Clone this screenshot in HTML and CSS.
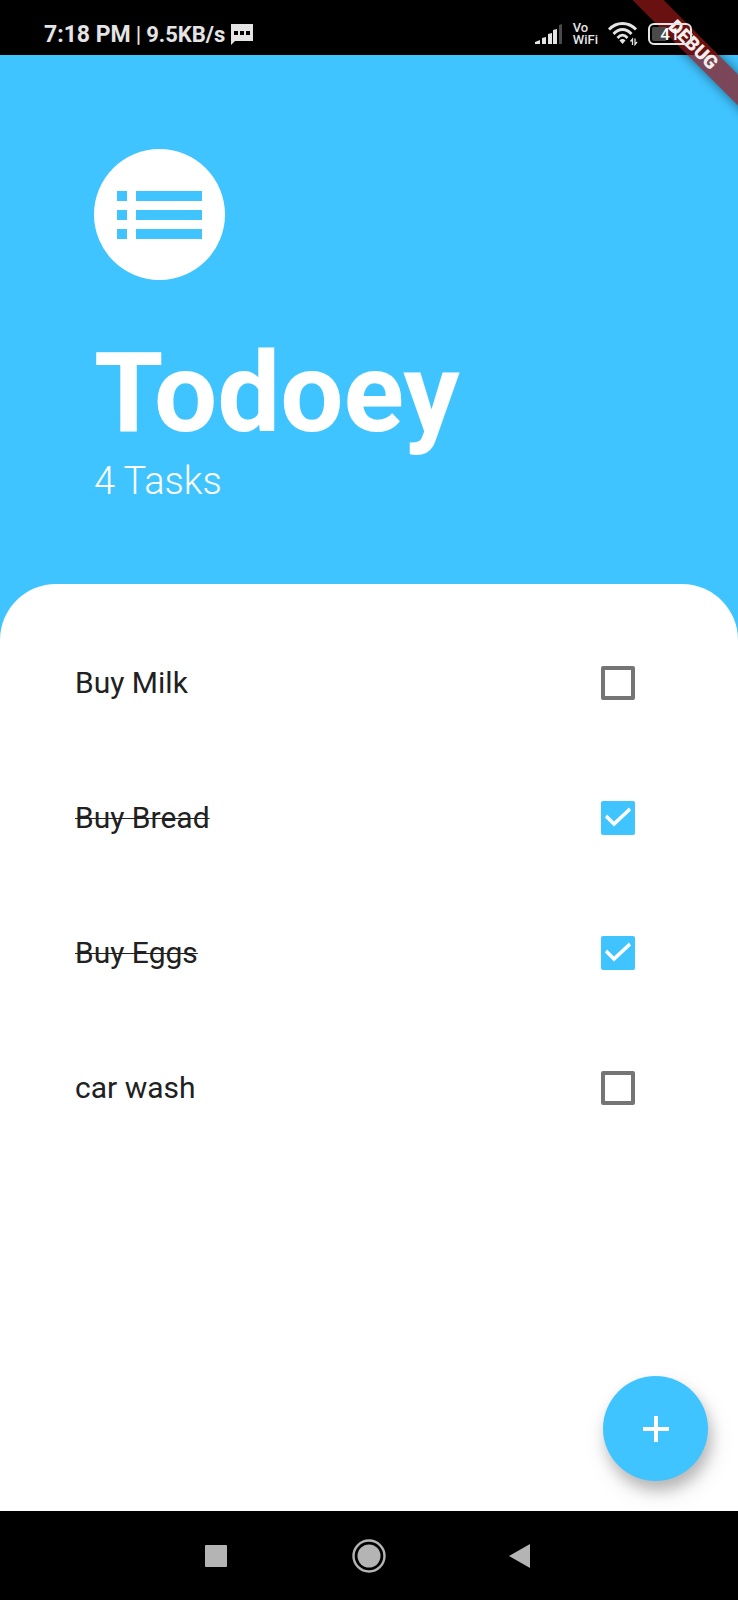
FILE: index.html
```html
<!DOCTYPE html>
<html lang="en">
<head>
<meta charset="utf-8">
<meta name="viewport" content="width=device-width, initial-scale=1">
<title>Todoey</title>
<link rel="stylesheet" href="styles.css">
</head>
<body>
<div class="app">
  <div class="status-bar">
    <div class="status-left">
      <span class="clock">7:18 PM</span>
      <span class="divider">|</span>
      <span class="speed">9.5KB/s</span>
      <svg class="chat-icon" width="24" height="22" viewBox="0 0 24 22" aria-hidden="true">
        <path fill="#e4e4e4" d="M1 1H23V18H5L1 22Z"/>
        <path fill="#000" d="M4 8h4v4H4zM10 8h4v4h-4zM16 8h4v4h-4z"/>
      </svg>
    </div>
    <div class="status-right">
      <svg width="28" height="22" viewBox="0 0 28 22" aria-hidden="true">
        <path fill="#e4e4e4" d="M0 21v-2l5-2v4zM7 15l4-1v7H7zM13 11l4-1v11h-4zM18 7l4-1v15h-4z"/>
        <path fill="#4a4a4a" d="M24 2l3-1v20h-3z"/>
      </svg>
      <span class="vowifi"><span>Vo</span><span>WiFi</span></span>
      <svg width="30" height="24" viewBox="0 0 30 24" aria-hidden="true">
        <g fill="none" stroke="#e4e4e4" stroke-width="2.8">
          <path d="M1 7.5C8.500-.5 20.500-.5 28 7.500"/>
          <path d="M5.500 12C11 6 18 6 23.500 12"/>
          <path d="M9.500 16C13 12.200 16 12.200 19.500 16"/>
        </g>
        <path fill="#e4e4e4" d="M11.500 18.500c1.500-2 4.500-2 6 0L14.500 22z"/>
        <path fill="none" stroke="#e4e4e4" stroke-width="1.300" d="M24.500 23v-6l-2 2.500M27 16.500v6l2-2.500"/>
      </svg>
      <span class="battery"><span class="battery-level">41</span></span>
    </div>
  </div>
  <div class="banner-clip"><div class="banner">DEBUG</div></div>

  <header class="header">
    <div class="logo">
      <svg width="86" height="48" viewBox="0 0 86 48" aria-hidden="true">
        <path fill="#40c4ff" d="M0 0h10v10H0zM19 0h66v10H19zM0 19h10v10H0zM19 19h66v10H19zM0 38h10v10H0zM19 38h66v10H19z"/>
      </svg>
    </div>
    <h1 class="title">Todoey</h1>
    <p class="count">4 Tasks</p>
  </header>

  <main class="sheet">
    <ul class="tasks">
      <li><label class="task"><span class="task-name">Buy Milk</span><input class="check" type="checkbox"></label></li>
      <li><label class="task"><span class="task-name done">Buy Bread</span><input class="check" type="checkbox" checked></label></li>
      <li><label class="task"><span class="task-name done">Buy Eggs</span><input class="check" type="checkbox" checked></label></li>
      <li><label class="task"><span class="task-name">car wash</span><input class="check" type="checkbox"></label></li>
    </ul>
    <button class="fab" type="button" aria-label="Add task">
      <svg width="28" height="28" viewBox="0 0 28 28" aria-hidden="true"><path fill="#fff" d="M12 1h4v11h11v4H16v11h-4V16H1v-4h11z"/></svg>
    </button>
  </main>

  <nav class="nav-bar" aria-label="System navigation">
    <button type="button" aria-label="Recent apps"><svg width="34" height="34" viewBox="0 0 34 34"><rect x="6" y="6" width="22" height="22" rx="1" fill="#b4b4b4"/></svg></button>
    <button type="button" aria-label="Home"><svg width="34" height="34" viewBox="0 0 34 34"><circle cx="17" cy="17" r="15.500" fill="none" stroke="#b4b4b4" stroke-width="2.400"/><circle cx="17" cy="17" r="11.500" fill="#b4b4b4"/></svg></button>
    <button type="button" aria-label="Back"><svg width="34" height="34" viewBox="0 0 34 34"><path d="M4 17L25 5V29Z" fill="#b4b4b4"/></svg></button>
  </nav>
</div>
</body>
</html>
```
FILE: styles.css
```css
* {
  box-sizing: border-box;
}

body {
  margin: 0;
  font-family: Roboto, "Noto Sans", sans-serif;
  color: #212121;
}

.app {
  position: relative;
  display: flex;
  flex-direction: column;
  min-height: 100vh;
  background: #40c4ff;
}

.status-bar {
  display: flex;
  justify-content: space-between;
  height: 55px;
  padding: 14px 46px 0 44px;
  background: #000;
  color: #e4e4e4;
}

.status-left,
.status-right {
  position: relative;
  z-index: 2;
  display: flex;
  align-items: center;
  height: 40px;
}

.status-left {
  gap: 5px;
  font-size: 23px;
  font-weight: 700;
}

.divider {
  font-size: 22px;
  font-weight: 500;
}

.speed {
  font-size: 22px;
}

.status-right {
  gap: 10px;
}

.vowifi {
  display: flex;
  flex-direction: column;
  font-size: 13px;
  font-weight: 500;
  line-height: 12px;
}

.battery {
  display: flex;
  align-items: center;
  justify-content: center;
  width: 44px;
  height: 22px;
  padding: 2px;
  border: 2px solid #e4e4e4;
  border-radius: 6px;
  background: linear-gradient(90deg, #4a4a4a 40%, transparent 40%) content-box;
}

.battery-level {
  color: #fff;
  font-size: 17px;
  font-weight: 500;
}

/* Corner ribbon */
.banner-clip {
  position: absolute;
  top: 0;
  right: 0;
  z-index: 1;
  width: 140px;
  height: 140px;
  overflow: hidden;
}

.banner {
  position: absolute;
  top: 34px;
  right: -55px;
  width: 200px;
  height: 22px;
  transform: rotate(45deg);
  background: rgba(145, 22, 24, 0.72);
  box-shadow: 0 0 12px rgba(0, 0, 0, 0.5);
  color: #f4eeee;
  font-size: 19px;
  font-weight: 900;
  line-height: 22px;
  text-align: center;
}

.header {
  padding: 94px 94px 80px;
  color: #fff;
}

.logo {
  display: grid;
  place-items: center;
  width: 131px;
  height: 131px;
  border-radius: 50%;
  background: #fff;
}

.title {
  margin: 47px 0 0;
  font-size: 112px;
  font-weight: 700;
  line-height: 132px;
}

.count {
  margin: 0;
  font-size: 38px;
  font-weight: 300;
  line-height: 45px;
}

.sheet {
  display: flex;
  flex: 1;
  flex-direction: column;
  justify-content: space-between;
  padding: 31px 30px 30px 75px;
  border-radius: 56px 56px 0 0;
  background: #fff;
}

.tasks {
  margin: 0;
  padding: 0;
  list-style: none;
}

.task {
  display: flex;
  align-items: center;
  justify-content: space-between;
  height: 135px;
  padding-right: 73px;
  font-size: 30px;
}

.done {
  text-decoration: line-through;
  text-decoration-thickness: 1px;
}

.check {
  width: 34px;
  height: 34px;
  margin: 0;
  border: 4px solid #757575;
  border-radius: 2px;
  appearance: none;
}

.check:checked {
  border: 0;
  background: #40c4ff;
}

.check:checked::before {
  display: block;
  width: 34px;
  height: 34px;
  background: #fff;
  clip-path: polygon(4px 17px, 6px 14px, 13px 21px, 28px 7px, 30px 10px, 13px 26px);
  content: "";
}

.fab {
  display: grid;
  place-items: center;
  align-self: flex-end;
  width: 105px;
  height: 105px;
  padding: 0;
  border: 0;
  border-radius: 50%;
  background: #40c4ff;
  box-shadow: 3px 9px 14px rgba(0, 0, 0, 0.22), 4px 12px 26px rgba(0, 0, 0, 0.1);
}

.nav-bar {
  position: relative;
  display: flex;
  justify-content: center;
  height: 89px;
  background: #000;
}

.nav-bar button {
  display: grid;
  place-items: center;
  width: 153px;
  padding: 0;
  border: 0;
  background: none;
}
```
